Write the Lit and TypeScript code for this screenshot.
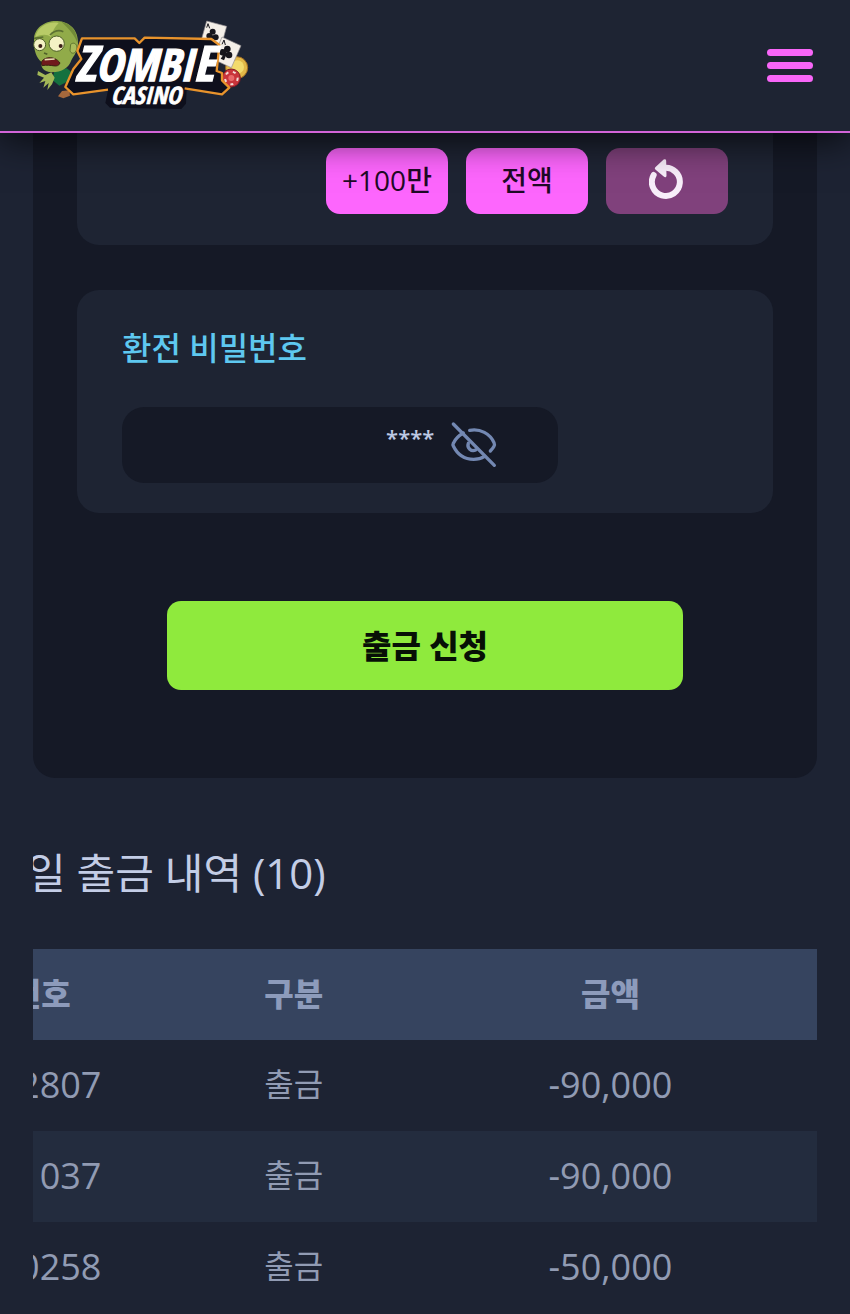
import { LitElement, html, css, svg } from 'lit';
import { customElement, property, state } from 'lit/decorators.js';

interface Withdrawal {
  id: string;
  type: string;
  amount: string;
}

@customElement('zombie-logo')
export class ZombieLogo extends LitElement {
  static styles = css`
    :host {
      display: block;
    }
    svg {
      display: block;
      width: 218px;
      height: 94px;
    }
    .word {
      font-family: 'Open Sans Condensed', 'Liberation Sans Narrow', 'Roboto', sans-serif;
      font-weight: 900;
      font-style: italic;
      fill: #fff;
      stroke: #fff;
      stroke-width: 4;
    }
    .title {
      font-size: 134px;
    }
    .title-big {
      font-size: 146px;
    }
    .subtitle {
      font-size: 72px;
      stroke-width: 2;
    }
  `;

  private renderZombie() {
    return svg`
      <path d="M104 184 L140 178 L156 190 L150 214 L118 230 L96 212 Z" fill="#14713f"/>
      <path d="M54 186 L76 198 L94 190 L104 206 L96 226 L82 243 L86 222 L70 236 L76 216 L58 222 L72 206 L52 198 Z" fill="#a3b858"/>
      <path d="M114 262 L126 246 L148 244 L150 260 L130 268 Z" fill="#a5683c"/>
      <path d="M42 92 C42 56 76 34 112 36 C150 38 176 64 174 104 C173 130 160 140 154 154 C148 176 124 190 96 190 C70 188 62 176 64 158 C50 148 40 122 42 92 Z" fill="#91ab49"/>
      <path d="M46 84 C52 54 84 36 116 42 C104 54 98 66 92 84 C84 76 66 74 46 84 Z" fill="#b8cb67"/>
      <path d="M124 38 C154 44 172 66 172 102 C166 82 150 62 124 38 Z" fill="#728b38"/>
      <path d="M152 106 C164 96 176 110 168 126 C162 136 152 134 150 124 Z" fill="#a9bd5c" stroke="#5f7430" stroke-width="3"/>
      <circle cx="59" cy="107" r="18" fill="#f4f2c4" stroke="#4e6029" stroke-width="3"/>
      <circle cx="110" cy="104" r="23" fill="#f4f2c4" stroke="#4e6029" stroke-width="3"/>
      <circle cx="61" cy="111" r="6" fill="#3a1f18"/>
      <circle cx="122" cy="111" r="6" fill="#3a1f18"/>
      <path d="M42 88 L70 84 M90 78 C102 66 116 62 130 68" stroke="#5c7031" stroke-width="5" fill="none"/>
      <path d="M72 132 L82 136" stroke="#4e6029" stroke-width="5"/>
      <path d="M64 162 C66 144 104 138 120 162 C112 180 96 164 66 170 Z" fill="#701a1c" stroke="#392311" stroke-width="3"/>
      <path d="M74 152 L104 150" stroke="#e7ddb4" stroke-width="5"/>
    `;
  }

  private renderCards() {
    return svg`
      <path d="M560 36 L620 52 L602 118 L542 100 Z" fill="#f4efe8" stroke="#8e8a8c" stroke-width="2"/>
      <g fill="#16151b">
        <circle cx="578" cy="68" r="9"/>
        <circle cx="568" cy="81" r="9"/>
        <circle cx="587" cy="85" r="9"/>
        <path d="M576 78 L582 80 L576 100 L566 96 Z"/>
      </g>
      <path d="M560 56 L564 44 L569 58" fill="none" stroke="#16151b" stroke-width="3"/>
      <circle cx="650" cy="176" r="33" fill="#e2b848" stroke="#a36d22" stroke-width="3"/>
      <circle cx="652" cy="174" r="20" fill="#f3db6d"/>
      <path d="M606 84 L663 110 L634 176 L578 150 Z" fill="#f4efe8" stroke="#8e8a8c" stroke-width="2"/>
      <g fill="#16151b">
        <circle cx="622" cy="120" r="10"/>
        <circle cx="608" cy="130" r="10"/>
        <circle cx="627" cy="138" r="10"/>
        <path d="M616 128 L622 131 L612 154 L602 149 Z"/>
      </g>
      <path d="M606 106 L612 93 L616 108" fill="none" stroke="#16151b" stroke-width="3"/>
      <circle cx="634" cy="207" r="27" fill="#c9343b" stroke="#7c1c26" stroke-width="3"/>
      <circle cx="634" cy="207" r="19" fill="none" stroke="#f2dcd5" stroke-width="6" stroke-dasharray="9 14"/>
      <circle cx="634" cy="207" r="9" fill="#e9696a"/>
    `;
  }

  render() {
    return html`
      <svg viewBox="36 30 654 282" role="img" aria-label="ZOMBIE CASINO">
        ${this.renderZombie()} ${this.renderCards()}
        <path
          d="M186 88 L344 88 L358 102 L374 86 L574 90 L598 108 L590 186 L604 190 L606 214 L628 236 L606 256 L500 240 L498 284 L484 300 L270 296 L256 282 L264 244 L160 256 L136 234 L160 180 L184 150 L172 128 Z"
          fill="#0e0f1c"
        />
        <path
          d="M264 242 L160 256 L136 234 L160 180 L184 150 L172 126 L186 88 L344 88 L358 102 L374 86 L574 90 L598 108 L590 186 L606 192 L606 214 L628 236 L606 256 L494 238"
          fill="none"
          stroke="#e8932c"
          stroke-width="7"
          stroke-linejoin="round"
        />
        <text class="word" x="164" y="216">
          <tspan class="title-big">Z</tspan><tspan class="title">OMBI</tspan><tspan class="title-big">E</tspan>
        </text>
        <text class="word subtitle" x="272" y="284">CASINO</text>
      </svg>
    `;
  }
}

@customElement('site-header')
export class SiteHeader extends LitElement {
  static styles = css`
    :host {
      display: flex;
      align-items: center;
      justify-content: space-between;
      box-sizing: border-box;
      height: 133px;
      padding: 0 37px 0 32px;
      background: #1e2433;
      border-bottom: 2px solid #d264d8;
      box-shadow: 0 6px 36px rgba(0, 0, 0, 0.75);
    }
    .menu {
      display: flex;
      flex-direction: column;
      gap: 6px;
      padding: 0;
      border: none;
      background: none;
      cursor: pointer;
    }
    .bar {
      width: 46px;
      height: 7px;
      border-radius: 4px;
      background: #f866f8;
    }
  `;

  render() {
    return html`
      <a href="#" aria-label="ZOMBIE CASINO"><zombie-logo></zombie-logo></a>
      <button class="menu" type="button" aria-label="메뉴">
        <span class="bar"></span>
        <span class="bar"></span>
        <span class="bar"></span>
      </button>
    `;
  }
}

@customElement('withdraw-form')
export class WithdrawForm extends LitElement {
  @state()
  private pin = '****';

  static styles = css`
    :host {
      display: block;
    }
    button,
    input {
      font-family: inherit;
      border: none;
    }
    button {
      cursor: pointer;
    }
    .panel {
      display: flex;
      flex-direction: column;
      padding: 0 44px 88px;
      border-radius: 0 0 22px 22px;
      background: #151926;
    }
    .card {
      border-radius: 22px;
      background: #1e2433;
    }
    .card.amounts {
      display: flex;
      justify-content: flex-end;
      gap: 18px;
      padding: 15px 45px 31px;
      border-radius: 0 0 22px 22px;
    }
    .chip {
      display: flex;
      align-items: center;
      justify-content: center;
      width: 122px;
      height: 66px;
      padding: 0 0 4px;
      border-radius: 14px;
      background: #fd66fd;
      color: #1f0a26;
      font-size: 28px;
      font-weight: 500;
    }
    .chip.reset {
      background: #80417c;
    }
    .chip.reset svg {
      width: 36px;
      height: 42px;
    }
    .card.secret {
      margin-top: 45px;
      padding: 38px 45px 30px;
    }
    .label {
      display: block;
      margin-bottom: 39px;
      color: #5ec8f0;
      font-size: 32px;
      font-weight: 500;
      line-height: 40px;
    }
    .field {
      display: flex;
      align-items: center;
      gap: 16px;
      box-sizing: border-box;
      width: 72%;
      height: 76px;
      padding-right: 60px;
      border-radius: 22px;
      background: #151926;
    }
    .field input {
      flex: 1;
      min-width: 0;
      padding: 0 0 16px;
      background: none;
      color: #bdc9e4;
      font-size: 22px;
      font-weight: 600;
      text-align: right;
      outline: none;
    }
    .eye {
      padding: 0;
      background: none;
    }
    .eye svg {
      display: block;
      width: 48px;
      height: 48px;
    }
    .submit {
      align-self: center;
      width: 74%;
      height: 89px;
      margin-top: 88px;
      padding: 0 0 4px;
      border-radius: 14px;
      background: #8fea3d;
      color: #071006;
      font-size: 32px;
      font-weight: 900;
    }
  `;

  private handleInput(e: Event) {
    this.pin = (e.target as HTMLInputElement).value;
  }

  render() {
    return html`
      <form class="panel" @submit=${(e: Event) => e.preventDefault()}>
        <div class="card amounts">
          <button class="chip" type="button">+100만</button>
          <button class="chip" type="button">전액</button>
          <button class="chip reset" type="button" aria-label="초기화">
            <svg viewBox="1017 68 108 126">
              <path
                d="M1031 119 A42 42 0 1 0 1062 98"
                fill="none"
                stroke="#f8eefa"
                stroke-width="18"
                stroke-linecap="round"
              />
              <path
                d="M1064 76 L1039 99 L1065 121 Z"
                fill="#f8eefa"
                stroke="#f8eefa"
                stroke-width="9"
                stroke-linejoin="round"
              />
            </svg>
          </button>
        </div>
        <div class="card secret">
          <label class="label" for="pin">환전 비밀번호</label>
          <div class="field">
            <input id="pin" type="text" autocomplete="off" .value=${this.pin} @input=${this.handleInput} />
            <button class="eye" type="button" aria-label="비밀번호 표시">
              <svg
                viewBox="270 94 144 144"
                fill="none"
                stroke="#7388b2"
                stroke-width="10"
                stroke-linecap="round"
                stroke-linejoin="round"
              >
                <path d="M280 103 L403 227" />
                <path d="M310 130 C294 139 284 152 280 161 Q278 165 280 169 C292 194 314 209 341 209 C353 209 364 206 374 200" />
                <path d="M329 122 C361 116 390 132 402 159 Q405 166 402 170 C399 176 395 180 391 184" />
                <path d="M325 161 A16 16 0 0 0 347 181" />
              </svg>
            </button>
          </div>
        </div>
        <button class="submit" type="submit">출금 신청</button>
      </form>
    `;
  }
}

@customElement('withdraw-history')
export class WithdrawHistory extends LitElement {
  @property({ type: Array })
  rows: Withdrawal[] = [];

  @property({ type: Number })
  total = 0;

  // The list is wider than its box and rests scrolled to the right edge
  static styles = css`
    :host {
      display: block;
      overflow: hidden;
    }
    h2 {
      margin: 67px 0 48px -6px;
      color: #c3cde6;
      font-size: 42px;
      font-weight: 400;
      line-height: 56px;
      white-space: nowrap;
    }
    table {
      width: calc(100% + 134px);
      margin-left: -134px;
      border-collapse: collapse;
      table-layout: fixed;
      color: #919bb3;
      font-size: 32px;
      line-height: 44px;
    }
    th,
    td {
      box-sizing: border-box;
      height: 91px;
      padding: 0 0 4px;
      text-align: center;
    }
    th {
      padding-bottom: 2px;
      background: #36445f;
      color: #8d9bbb;
      font-weight: 900;
    }
    th:nth-child(1) {
      width: 31%;
    }
    th:nth-child(2) {
      width: 24%;
    }
    tbody tr:nth-child(even) {
      background: #232c3e;
    }
    .number {
      padding-bottom: 2px;
      font-size: 36px;
    }
    .id {
      padding-left: 38px;
    }
  `;

  render() {
    return html`
      <h2>일 출금 내역 (${this.total})</h2>
      <table>
        <thead>
          <tr>
            <th>번호</th>
            <th>구분</th>
            <th>금액</th>
          </tr>
        </thead>
        <tbody>
          ${this.rows.map(
            (row) => html`
              <tr>
                <td class="number id">${row.id}</td>
                <td>${row.type}</td>
                <td class="number">${row.amount}</td>
              </tr>
            `
          )}
        </tbody>
      </table>
    `;
  }
}

@customElement('app-root')
export class AppRoot extends LitElement {
  private rows: Withdrawal[] = [
    { id: '2807', type: '출금', amount: '-90,000' },
    { id: '1037', type: '출금', amount: '-90,000' },
    { id: '0258', type: '출금', amount: '-50,000' },
  ];

  static styles = css`
    :host {
      display: block;
      min-height: 100vh;
      background: #1d2333;
      font-family: 'Open Sans', 'Noto Sans CJK KR', sans-serif;
    }
    site-header {
      position: sticky;
      top: 0;
      z-index: 1;
    }
    main {
      padding: 0 33px;
    }
  `;

  render() {
    return html`
      <site-header></site-header>
      <main>
        <withdraw-form></withdraw-form>
        <withdraw-history .rows=${this.rows} .total=${10}></withdraw-history>
      </main>
    `;
  }
}
